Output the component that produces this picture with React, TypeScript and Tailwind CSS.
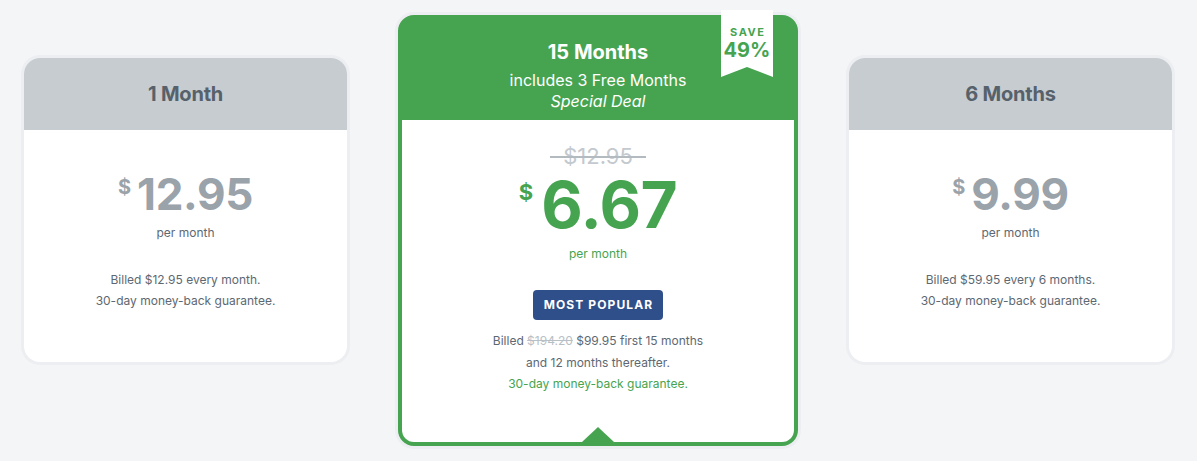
import React from 'react';

type Plan = {
  title: string;
  price: string;
  billed: string;
};

const SIDE_PLANS: Record<'left' | 'right', Plan> = {
  left: { title: '1 Month', price: '12.95', billed: 'Billed $12.95 every month.' },
  right: { title: '6 Months', price: '9.99', billed: 'Billed $59.95 every 6 months.' },
};

function SideCard({ plan }: { plan: Plan }) {
  return (
    <div className="mt-[43px] w-[323px] h-[304px] rounded-2xl bg-white shadow-[0_0_0_3px_#eceef1] overflow-hidden flex flex-col">
      {/* Header */}
      <div className="h-[72px] bg-[#c6ccd0] flex items-center justify-center">
        <span className="text-[20px] font-bold text-[#56616b] tracking-[-0.2px]">{plan.title}</span>
      </div>

      {/* Body */}
      <div className="flex flex-col items-center pt-[42px]">
        <div className="flex items-start">
          <span className="mt-[5px] mr-[6px] text-[20px] font-bold leading-none text-[#9aa2aa]">$</span>
          <span className="text-[44px] font-bold leading-none text-[#9aa2aa] tracking-[-0.3px]">{plan.price}</span>
        </div>
        <div className="mt-[9px] text-[12px] leading-4 text-[#5d6872]">per month</div>
        <div className="mt-[28px] text-[12px] leading-[21px] text-[#5d6872] text-center">
          <div>{plan.billed}</div>
          <div>30-day money-back guarantee.</div>
        </div>
      </div>
    </div>
  );
}

function FeaturedCard() {
  return (
    <div className="relative w-[400px] h-[431px] rounded-2xl bg-[#46a450] border-4 border-[#46a450] shadow-[0_0_0_3px_#eceef1] flex flex-col">
      {/* Save ribbon */}
      <div className="absolute top-[-9px] right-[21px] w-[52px] h-[67px] bg-white [clip-path:polygon(0_0,100%_0,100%_100%,50%_calc(100%-10px),0_100%)] flex flex-col items-center pt-[15px]">
        <span className="text-[11px] font-bold leading-[14px] tracking-[1.5px] pl-[1.5px] text-[#46a450]">SAVE</span>
        <span className="text-[20px] font-bold leading-[22px] text-[#46a450]">49%</span>
      </div>

      {/* Header */}
      <div className="h-[101px] flex flex-col items-center pt-[19px] text-white">
        <div className="text-[20px] font-bold leading-7">15 Months</div>
        <div className="mt-[4px] text-[16px] leading-[21px]">includes 3 Free Months</div>
        <div className="text-[16px] leading-[21px] italic">Special Deal</div>
      </div>

      {/* Body */}
      <div className="relative flex-1 bg-white rounded-b-[12px] flex flex-col items-center pt-[22px]">
        <div className="relative px-[13px] text-[22px] leading-7 text-[#c3c9ce]">
          $12.95
          <div className="absolute left-0 right-0 top-[14px] h-[2px] bg-[#b3bac0]" />
        </div>
        <div className="mt-[3px] flex items-start">
          <span className="mt-[8px] mr-[8px] text-[22px] font-bold leading-none text-[#46a450]">$</span>
          <span className="text-[64px] font-bold leading-none text-[#46a450] tracking-[-0.5px]">6.67</span>
        </div>
        <div className="mt-[9px] text-[12px] leading-4 text-[#46a450]">per month</div>
        <div className="mt-[28px] h-[30px] px-[10px] rounded-[4px] bg-[#2f4f8a] flex items-center">
          <span className="text-[12px] font-bold tracking-[1.1px] pl-[1px] text-white">MOST POPULAR</span>
        </div>
        <div className="mt-[10px] text-[12px] leading-[21.5px] text-[#5d6872] text-center">
          <div>
            Billed <span className="line-through text-[#b8c0c6]">$194.20</span> $99.95 first 15 months
          </div>
          <div>and 12 months thereafter.</div>
          <div className="text-[#46a450]">30-day money-back guarantee.</div>
        </div>

        {/* Pointer */}
        <div className="absolute bottom-0 left-1/2 -translate-x-1/2 w-0 h-0 border-x-[16px] border-x-transparent border-b-[15px] border-b-[#46a450]" />
      </div>
    </div>
  );
}

export default function App() {
  return (
    <div className="w-[1197px] h-[461px] bg-[#f4f5f7] font-['Inter',sans-serif] flex items-start pt-[15px] pl-[24px] gap-[51px]">
      <SideCard plan={SIDE_PLANS.left} />
      <FeaturedCard />
      <SideCard plan={SIDE_PLANS.right} />
    </div>
  );
}
